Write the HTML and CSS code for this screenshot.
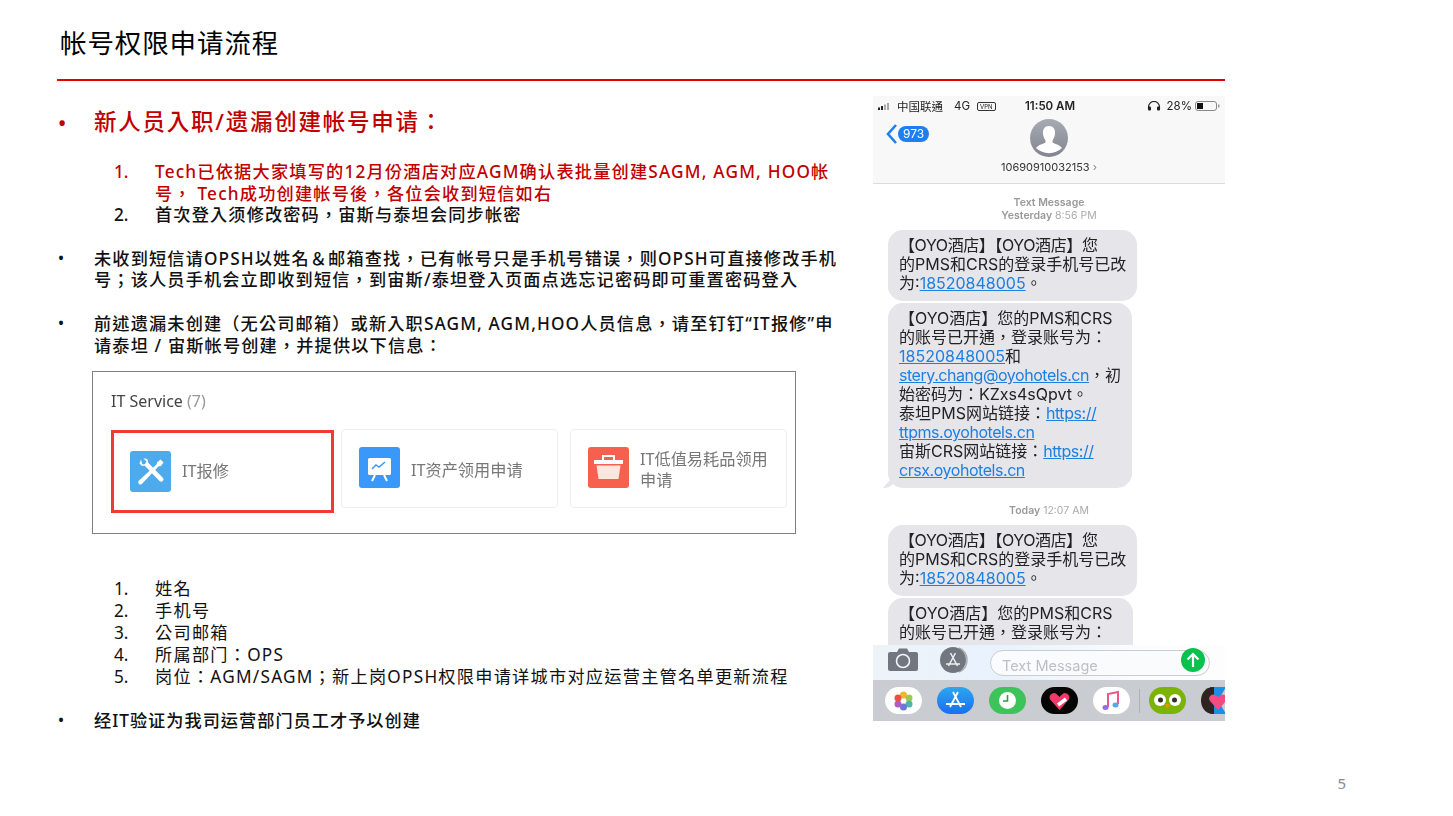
FILE: index.html
```html
<!DOCTYPE html>
<html lang="zh-TW">
<head>
<meta charset="utf-8">
<title>帐号权限申请流程</title>
<link rel="stylesheet" href="styles.css">
</head>
<body>
<div class="slide">
  <header class="head"><h1 class="title">帐号权限申请流程</h1></header>
  <div class="rule"></div>
  <main class="main">
    <section class="left">
      <div class="bullet lead"><span class="mark">•</span><span>新人员入职/遗漏创建帐号申请：</span></div>
      <div class="steps">
        <div class="item red"><span class="n">1.</span><span>Tech已依据大家填写的12月份酒店对应AGM确认表批量创建SAGM, AGM, HOO帐<br>号， Tech成功创建帐号後，各位会收到短信如右</span></div>
        <div class="item"><span class="n">2.</span><span>首次登入须修改密码，宙斯与泰坦会同步帐密</span></div>
      </div>
      <div class="bullet para"><span class="mark sm">•</span><span>未收到短信请OPSH以姓名＆邮箱查找，已有帐号只是手机号错误，则OPSH可直接修改手机<br>号；该人员手机会立即收到短信，到宙斯/泰坦登入页面点选忘记密码即可重置密码登入</span></div>
      <div class="bullet para"><span class="mark sm">•</span><span>前述遗漏未创建（无公司邮箱）或新入职SAGM, AGM,HOO人员信息，请至钉钉“IT报修”申<br>请泰坦 / 宙斯帐号创建，并提供以下信息：</span></div>
      <div class="service">
        <div class="svc-title">IT Service <span class="count">(7)</span></div>
        <div class="cards">
          <div class="card hot">
            <svg class="ic" viewBox="0 0 41 41"><rect width="41" height="41" rx="3" fill="#4dabec"/><path d="M11 8.500l-1.500 4 2.500 2.500 2.500-.5 15 15.500a2.200 2.200 0 0 0 3.300-3.300L18 11.500c.5-3-1.500-4.500-4.500-4l3 3-1.500 2.500-2.700.5z M30.500 8.500l-3.500 3-.3 1.700L9 29.500a2.200 2.200 0 0 0 3 3.300L28.700 15.300l2.300-.3 2.500-3.500z" fill="#fff"/></svg>
            <span class="card-text">IT报修</span>
          </div>
          <div class="card">
            <svg class="ic" viewBox="0 0 41 41"><rect width="41" height="41" rx="3" fill="#3a98fb"/><rect x="9" y="11" width="23" height="17" rx="1.500" fill="#fff"/><path d="M13 22l4-4 3 2 6-5" fill="none" stroke="#3a98fb" stroke-width="1.500"/><path d="M16 28l-3 6M25 28l3 6" stroke="#fff" stroke-width="2"/></svg>
            <span class="card-text">IT资产领用申请</span>
          </div>
          <div class="card">
            <svg class="ic" viewBox="0 0 41 41"><rect width="41" height="41" rx="3" fill="#f6604e"/><path d="M15 13v-4h11v4" fill="none" stroke="#fff" stroke-width="2"/><path d="M6 13h29v4H6z" fill="#fff"/><path d="M8.500 18.500h24l-2 13.500h-20z" fill="#fde5e0"/></svg>
            <span class="card-text">IT低值易耗品领用<br>申请</span>
          </div>
        </div>
      </div>
      <div class="plain">
        <div class="item"><span class="n">1.</span><span>姓名</span></div>
        <div class="item"><span class="n">2.</span><span>手机号</span></div>
        <div class="item"><span class="n">3.</span><span>公司邮箱</span></div>
        <div class="item"><span class="n">4.</span><span>所属部门：OPS</span></div>
        <div class="item"><span class="n">5.</span><span>岗位：AGM/SAGM；新上岗OPSH权限申请详城市对应运营主管名单更新流程</span></div>
      </div>
      <div class="bullet para last"><span class="mark sm">•</span><span>经IT验证为我司运营部门员工才予以创建</span></div>
    </section>

    <aside class="phone">
      <div class="nav">
        <div class="status">
          <span class="status-l">
            <svg class="signal" viewBox="0 0 13 7"><rect x="0" y="4.500" width="2" height="2.500" fill="#222"/><rect x="3" y="3" width="2" height="4" fill="#222"/><rect x="6" y="1.500" width="2" height="5.500" fill="#aaa"/><rect x="9" y="0" width="2" height="7" fill="#aaa"/></svg>
            <span>中国联通</span><span class="g4">4G</span><span class="vpn">VPN</span>
          </span>
          <span class="clock">11:50 AM</span>
          <span class="status-r">
            <svg class="phones" viewBox="0 0 14 10"><path d="M1.500 8V6a5 5 0 0 1 11 0v2" fill="none" stroke="#222" stroke-width="1.200"/><rect x="1" y="5.500" width="3" height="4" rx="1" fill="#222"/><rect x="10" y="5.500" width="3" height="4" rx="1" fill="#222"/></svg>
            <span>28%</span>
            <svg class="battery" viewBox="0 0 25 10"><rect x=".5" y=".5" width="21" height="9" rx="2.500" fill="none" stroke="#888"/><rect x="2" y="2" width="6" height="6" fill="#111"/><rect x="23" y="3.500" width="1.500" height="3" fill="#999"/></svg>
          </span>
        </div>
        <div class="back">
          <svg class="chev" viewBox="0 0 13 22"><path d="M11 2L3 11l8 9" fill="none" stroke="#1e80f0" stroke-width="2.600"/></svg>
          <span class="pill">973</span>
        </div>
        <div class="contact">
          <svg class="avatar" viewBox="0 0 38 38"><defs><linearGradient id="av" x1="0" y1="0" x2="0" y2="1"><stop offset="0" stop-color="#a6aab3"/><stop offset="1" stop-color="#82858f"/></linearGradient></defs><circle cx="19" cy="19" r="19" fill="url(#av)"/><path d="M19 7c4.500 0 6.500 3.500 6 8-.3 3-1.500 5-2.500 6.500v2c2 1.500 7 2 9.500 5.500a19 19 0 0 1-26 0c2.500-3.500 7.500-4 9.500-5.500v-2C14.500 20 13.300 18 13 15c-.5-4.500 1.500-8 6-8z" fill="#fff"/></svg>
          <div class="num">10690910032153 <span class="gt">›</span></div>
        </div>
      </div>
      <div class="thread">
        <div class="stamp"><b>Text Message</b><br><b>Yesterday</b> 8:56 PM</div>
        <div class="bubble wide"><span class="tight">【OYO酒店】【OYO酒店】您</span><br>的PMS和CRS的登录手机号已改<br>为:<a class="lnk">18520848005</a>。</div>
        <div class="bubble tail">【OYO酒店】您的PMS和CRS<br>的账号已开通，登录账号为：<br><a class="lnk">18520848005</a>和<br><a class="lnk url">stery.chang@oyohotels.cn</a>，初<br>始密码为：KZxs4sQpvt。<br>泰坦PMS网站链接：<a class="lnk url">https://</a><br><a class="lnk url">ttpms.oyohotels.cn</a><br>宙斯CRS网站链接：<a class="lnk url">https://</a><br><a class="lnk url">crsx.oyohotels.cn</a></div>
        <div class="stamp today"><b>Today</b> 12:07 AM</div>
        <div class="bubble wide"><span class="tight">【OYO酒店】【OYO酒店】您</span><br>的PMS和CRS的登录手机号已改<br>为:<a class="lnk">18520848005</a>。</div>
        <div class="bubble cut">【OYO酒店】您的PMS和CRS<br>的账号已开通，登录账号为：</div>
      </div>
      <div class="compose">
        <svg class="cam" viewBox="0 0 30 23"><path d="M2 4h7l2-3.500h8L21 4h7a2 2 0 0 1 2 2v15a2 2 0 0 1-2 2H2a2 2 0 0 1-2-2V6a2 2 0 0 1 2-2z" fill="#72777f"/><circle cx="15" cy="13" r="6.500" fill="none" stroke="#f2f6fa" stroke-width="1.600"/></svg>
        <svg class="apps" viewBox="0 0 34 26"><path d="M20 1a13 13 0 0 1 0 24" fill="none" stroke="#aaaeb5" stroke-width="1.500"/><circle cx="14" cy="13" r="13" fill="#72777f"/><path d="M11.500 6l7 13M16.500 6l-7 13M7 17h14" stroke="#eef0f3" stroke-width="1.500" fill="none"/></svg>
        <div class="field">
          <span class="ph">Text Message</span>
          <svg class="send" viewBox="0 0 24 24"><circle cx="12" cy="12" r="12" fill="#09c14c"/><path d="M12 19V6M6.500 11.500L12 6l5.500 5.500" fill="none" stroke="#fff" stroke-width="2.200"/></svg>
        </div>
      </div>
      <div class="dock">
        <svg class="app" viewBox="0 0 37 27"><rect width="37" height="27" rx="13.500" fill="#fff"/><circle cx="18.500" cy="8" r="3.500" fill="#f3b52c"/><circle cx="24" cy="11" r="3.500" fill="#9ccb4a"/><circle cx="24" cy="17" r="3.500" fill="#4cb6a4"/><circle cx="18.500" cy="20" r="3.500" fill="#6a78d8"/><circle cx="13" cy="17" r="3.500" fill="#b05ac8"/><circle cx="13" cy="11" r="3.500" fill="#e8523f"/></svg>
        <svg class="app" viewBox="0 0 37 27"><defs><linearGradient id="as" x1="0" y1="0" x2="0" y2="1"><stop offset="0" stop-color="#2ba7f0"/><stop offset="1" stop-color="#1b6ef0"/></linearGradient></defs><rect width="37" height="27" rx="13.500" fill="url(#as)"/><path d="M16 5l8 15M21 5l-8 15M9 17h19" stroke="#fff" stroke-width="1.800" fill="none"/></svg>
        <svg class="app" viewBox="0 0 37 27"><rect width="37" height="27" rx="13.500" fill="#3cc45a"/><circle cx="18.500" cy="13.500" r="8.500" fill="#fff"/><path d="M18.500 8v6h-4.500" stroke="#2f9e4a" stroke-width="1.600" fill="none"/></svg>
        <svg class="app" viewBox="0 0 37 27"><rect width="37" height="27" rx="13.500" fill="#050505"/><path d="M18.500 23L9.500 13c-3-4 2.500-9 6-6l3 3 3-3c3.500-3 9 2 6 6z" fill="#ee3a68"/><path d="M17 18l8-6" stroke="#fff" stroke-width="3.500"/></svg>
        <svg class="app" viewBox="0 0 37 27"><rect width="37" height="27" rx="13.500" fill="#fff"/><path d="M15 20V7l10-2v12" fill="none" stroke="#e85a8c" stroke-width="2"/><ellipse cx="12.500" cy="20.500" rx="3" ry="2.500" fill="#9a6ae0"/><ellipse cx="22.500" cy="18" rx="3" ry="2.500" fill="#54a6e8"/></svg>
        <span class="sep"></span>
        <svg class="app" viewBox="0 0 37 27"><rect width="37" height="27" rx="13.500" fill="#7cb305"/><circle cx="11" cy="13" r="6" fill="#fff"/><circle cx="26" cy="13" r="6" fill="#fff"/><circle cx="11.500" cy="13" r="2.500" fill="#33302c"/><circle cx="25.500" cy="13" r="2.500" fill="#33302c"/><path d="M16 17h5l-2.500 5z" fill="#f49000"/></svg>
        <svg class="app last-app" viewBox="0 0 25 27"><path d="M9 0h16l-8 13.500L25 27H9z" fill="#1b8fe8"/><path d="M13 0C3 0 0 8 0 13.500S3 27 13 27z" fill="#2d2420"/><path d="M17 23L9 14c-3-4 2-8 5-6l3 2 3-2c3-2 8 2 5 6z" fill="#f54a82"/></svg>
      </div>
    </aside>
  </main>
  <footer class="foot">5</footer>
</div>
</body>
</html>
```
FILE: styles.css
```css
html, body { margin: 0; padding: 0; background: #fff; }
body { font-family: "Noto Sans", "Noto Sans CJK TC", sans-serif; color: #111; }
.slide { width: 1453px; height: 816px; overflow: hidden; display: flex; flex-direction: column; }

.head { height: 79px; padding-left: 60px; display: flex; align-items: flex-start; box-sizing: border-box; padding-top: 24px; }
.title { margin: 0; font-size: 26.500px; line-height: 38px; font-weight: 400; letter-spacing: .900px; color: #000; }
.rule { margin-left: 57px; width: 1168px; height: 2px; background: #e60000; }

.main { display: flex; margin-left: 57px; width: 1168px; height: 640px; }
.left { width: 816px; padding-top: 25px; font-size: 17.200px; line-height: 21.700px; letter-spacing: 1.140px; font-weight: 500; }

.bullet { display: flex; white-space: nowrap; }
.mark { width: 37px; flex: none; letter-spacing: 0; }
.mark.sm { font-size: 16px; padding-left: 1px; width: 36px; }
.lead { color: #c00000; font-size: 22.500px; line-height: 32px; letter-spacing: 1.750px; }
.lead .mark { letter-spacing: 0; padding-left: 1px; width: 36px; font-size: 22px; }
.para { margin-top: 22px; }
.para.last { margin-top: 22px; letter-spacing: 1px; }

.steps { margin-top: 23px; padding-left: 57px; line-height: 21.500px; }
.item { display: flex; white-space: nowrap; }
.n { width: 41px; flex: none; letter-spacing: 0; }
.red { color: #c00000; }
.red span + span { letter-spacing: 1.200px; }

.service { margin: 15px 0 0 35px; width: 702px; height: 161px; border: 1px solid #7f7f7f; display: flex; flex-direction: column; font-weight: 400; letter-spacing: 0; color: #666; filter: blur(.3px); }
.svc-title { margin: 18px 0 0 18px; line-height: 22px; color: #444; font-size: 16px; }
.count { color: #999; }
.cards { display: flex; margin: 19px 0 0 18px; gap: 7px; align-items: flex-start; }
.card { width: 217px; height: 79px; border: 1px solid #eeeeee; border-radius: 4px; box-sizing: border-box; display: flex; align-items: center; padding-left: 17px; gap: 11px; color: #777; font-size: 16px; margin-top: -2px; }
.card:last-child { margin-left: 5px; }
.card .ic { margin-top: -2px; }
.card.hot { width: 223px; height: 83px; border: 3px solid #f03a35; border-radius: 0; padding-left: 16px; margin-top: -1px; }
.card.hot .ic { margin-top: 0; }
.ic { width: 41px; height: 41px; flex: none; }
.card-text { line-height: 21px; padding-top: 3px; font-size: 16.200px; }
.hot .card-text { padding-top: 0; }

.plain { margin-top: 44px; padding-left: 57px; font-weight: 400; color: #111; line-height: 22px; letter-spacing: 1.250px; }

.phone { width: 352px; margin: 15px 0 0 auto; height: 625px; display: flex; flex-direction: column; overflow: hidden; font-family: "Inter", "Noto Sans CJK TC", sans-serif; background: #fff; filter: blur(.3px); }
.nav { height: 87px; flex: none; background: #f8f8f8; border-bottom: 1px solid #dcdcdc; display: flex; flex-direction: column; position: relative; }
.status { display: flex; align-items: center; height: 20px; padding: 0 5px; font-size: 11.500px; color: #222; }
.status-l { display: flex; align-items: center; gap: 6px; width: 147px; flex: none; }
.g4 { margin-left: 5px; }
.vpn { font-size: 6px; border: 1px solid #333; border-radius: 2px; padding: 0 2px; line-height: 7px; margin-left: 1px; }
.signal { width: 13px; height: 7px; }
.clock { font-weight: 600; font-size: 11.500px; }
.status-r { display: flex; align-items: center; gap: 3px; margin-left: auto; }
.phones { width: 14px; height: 10px; margin-right: 3px; }
.battery { width: 25px; height: 10px; }

.back { position: absolute; left: 12px; top: 27px; display: flex; align-items: center; }
.chev { width: 13px; height: 22px; }
.pill { background: #1e80f0; color: #fff; font-size: 12px; line-height: 16px; border-radius: 8px; padding: 0 5px; }
.contact { display: flex; flex-direction: column; align-items: center; margin-top: 3px; }
.avatar { width: 38px; height: 38px; }
.num { font-size: 11px; line-height: 13px; margin-top: 4px; color: #333; }
.gt { color: #888; }

.thread { flex: 1; min-height: 0; overflow: hidden; padding: 12px 0 0 15px; font-size: 16px; line-height: 19px; color: #222; }
.stamp { width: 322px; text-align: center; font-size: 10.500px; line-height: 13px; color: #aaa; margin-bottom: 8px; }
.stamp b { font-weight: 600; color: #999; }
.stamp.today { margin-top: 16px; margin-bottom: 8px; }
.bubble { width: 244px; box-sizing: border-box; background: #e5e5ea; border-radius: 15px; padding: 6px 0 8px 11px; margin-bottom: 2px; white-space: nowrap; position: relative; }
.bubble.wide { width: 249px; }
.bubble.cut { width: 245px; padding-bottom: 30px; }
.tight { letter-spacing: -.400px; }
.tail::before { content: ""; position: absolute; left: -5px; bottom: 0; width: 12px; height: 14px; background: #e5e5ea; border-bottom-right-radius: 10px; clip-path: polygon(100% 0, 100% 100%, 0 100%); }
.lnk { color: #1e7fe0; text-decoration: underline; }
.url { letter-spacing: -.450px; }

.compose { height: 35px; flex: none; display: flex; align-items: center; background: linear-gradient(90deg, #eef3f8, #e8f2fd 35%, #fbfcfd 75%, #fdfdfd); padding-left: 15px; }
.cam { width: 30px; height: 23px; flex: none; margin-top: -6px; }
.apps { width: 34px; height: 26px; margin-left: 21px; flex: none; margin-top: -6px; }
.field { margin-left: 17px; width: 220px; height: 26px; box-sizing: border-box; border: 1px solid #c9ccd1; border-radius: 13px; display: flex; align-items: center; justify-content: space-between; padding-left: 11px; background: #fafbfc; }
.ph { font-size: 14.500px; line-height: 18px; color: #bdbfc4; padding-top: 6px; }
.send { width: 24px; height: 24px; margin-right: 4px; margin-top: -5px; }

.dock { height: 41px; flex: none; background: #c9ccd1; display: flex; align-items: center; padding-left: 12px; gap: 15px; }
.app { width: 37px; height: 27px; flex: none; }
.sep { width: 1px; height: 24px; background: #aeb1b6; margin: 0 -6px; flex: none; }
.last-app { width: 25px; }

.foot { height: 42px; text-align: right; padding-right: 107px; font-size: 15px; color: #8a8a8a; line-height: 20px; margin-top: 52px; letter-spacing: 0; }
```
